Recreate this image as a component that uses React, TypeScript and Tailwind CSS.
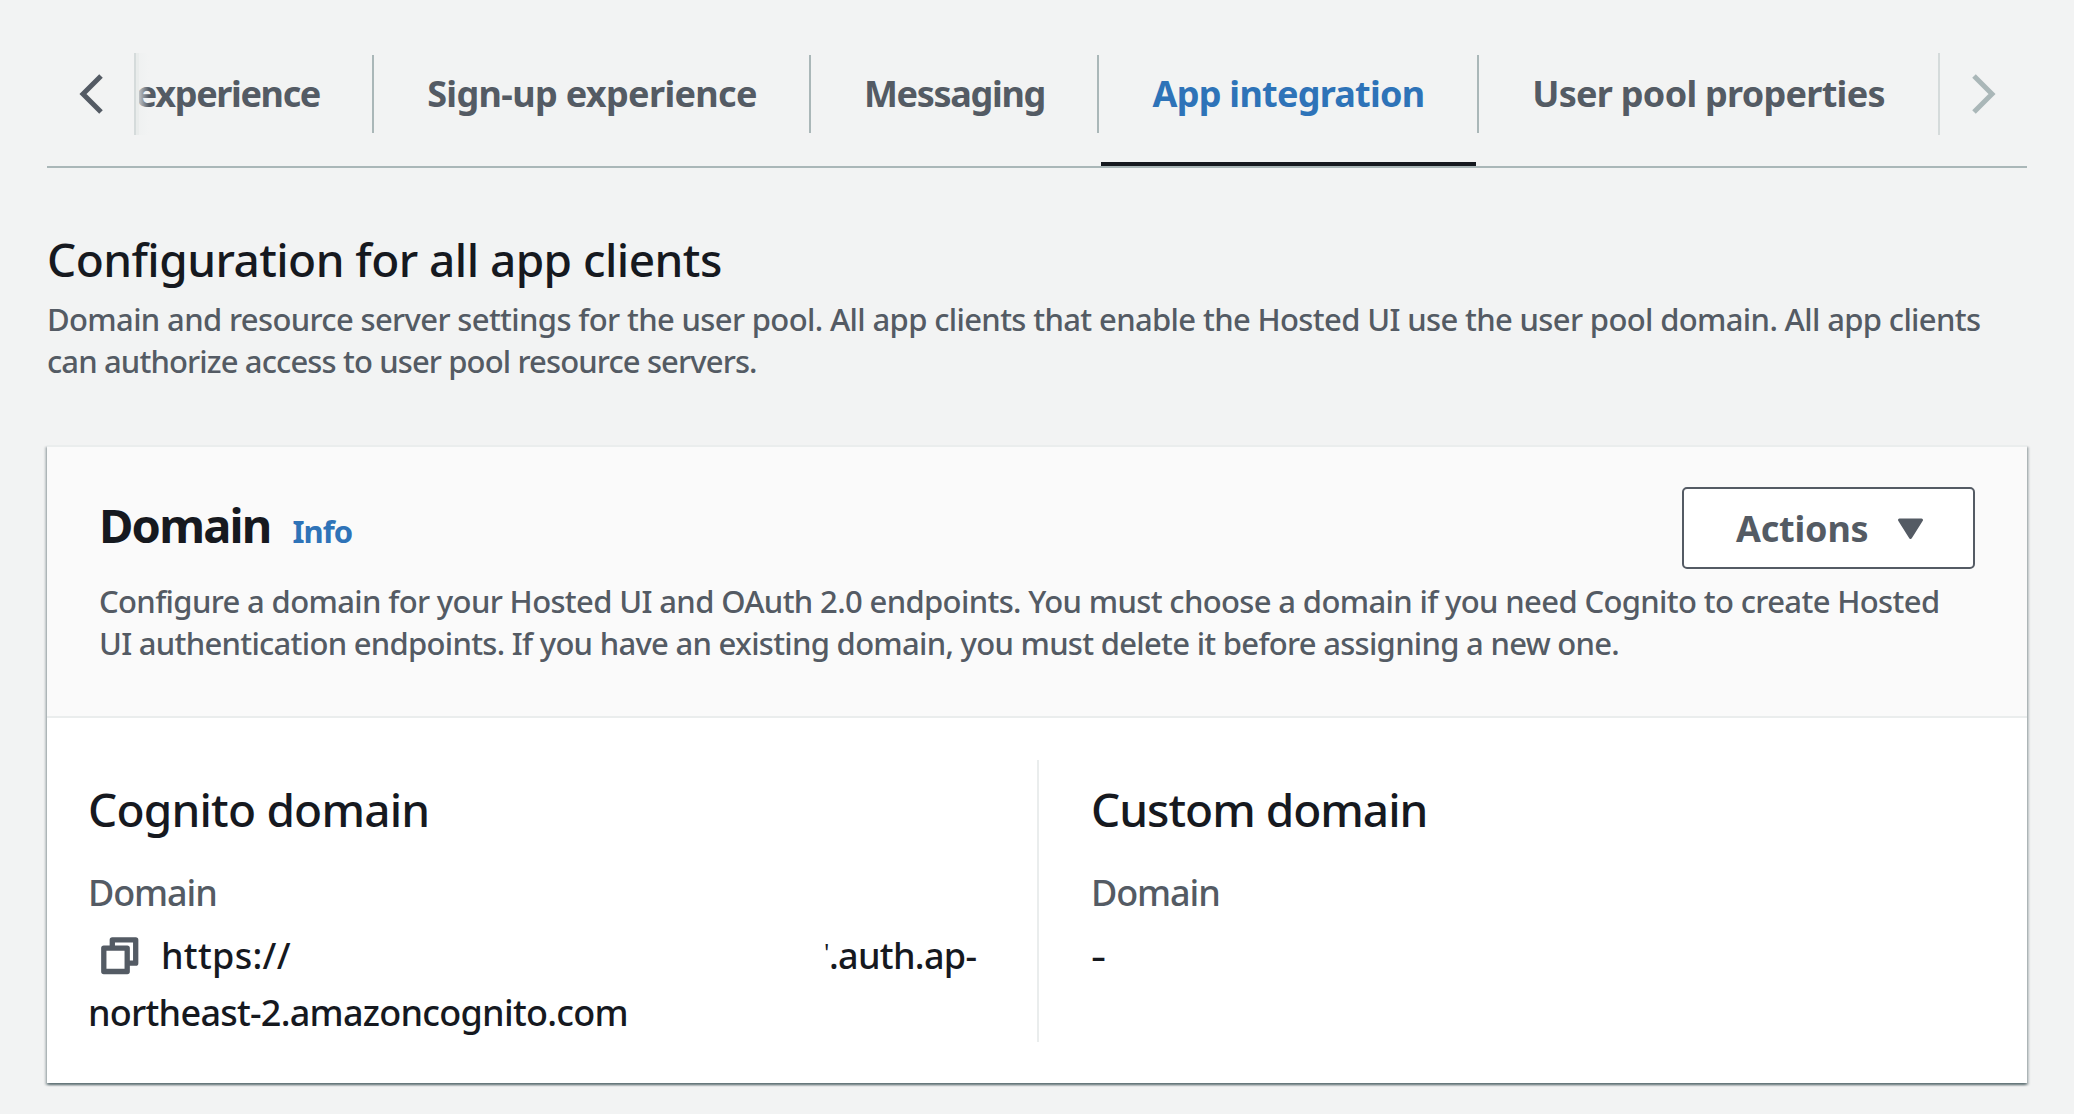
import React from "react";

function CopyIcon() {
  return (
    <svg className="h-[38px] w-[38px]" viewBox="0 0 38 38" fill="none" stroke="#545b64" strokeWidth="5.3" strokeLinejoin="round">
      <path d="M11.3 9V2.8h23.4v23.4h-7" />
      <rect x="2.8" y="11.1" width="23.4" height="23.4" />
    </svg>
  );
}

function Chevron({ direction, className }: { direction: "left" | "right"; className: string }) {
  return (
    <svg className={`h-[40px] w-[24px] ${className}`} viewBox="0 0 24 40" fill="none" stroke="currentColor" strokeWidth="5">
      <path d={direction === "left" ? "M22 2L4 20l18 18" : "M2 2l18 18-18 18"} />
    </svg>
  );
}

function Tab({ label, className, active = false }: { label: string; className: string; active?: boolean }) {
  return (
    <button
      className={`relative flex h-[78px] shrink-0 items-center border-r-2 border-[#aab7b8] text-[36px] font-bold whitespace-nowrap ${
        active ? "text-[#2e73b8]" : "text-[#545b64]"
      } ${className}`}
    >
      {label}
      {active && <span className="absolute top-[107px] right-[1px] left-[2px] h-[4px] bg-[#16191f]" />}
    </button>
  );
}

function Tabs() {
  return (
    <nav className="flex h-[168px] border-b-2 border-[#aab7b8] pt-[53px]">
      <button className="flex h-[82px] w-[89px] shrink-0 items-center border-r-2 border-[#d5dbdb] pl-[32px]">
        <Chevron direction="left" className="text-[#545b64]" />
      </button>
      <div className="relative flex w-[1802px] shrink-0 pt-[2px]">
        <span className="absolute top-0 left-0 z-10 h-[82px] w-[3px] bg-[#e9eceb]" />
        <span className="absolute top-0 left-[3px] z-10 h-[82px] w-[10px] bg-linear-to-r from-[#eef0f0]/70 to-transparent" />
        <Tab label="experience" className="w-[238px] justify-end pr-[52px] tracking-[-1.35px]" />
        <Tab label="Sign-up experience" className="w-[437px] justify-center pl-[1px] tracking-[-0.65px]" />
        <Tab label="Messaging" className="w-[288px] justify-center pl-[1px] tracking-[-1.3px]" />
        <Tab label="App integration" active className="w-[380px] justify-center pl-[1px] tracking-[-0.75px]" />
        <div className="flex h-[78px] flex-1 items-center justify-center text-[36px] font-bold tracking-[-0.72px] whitespace-nowrap text-[#545b64]">
          User pool properties
        </div>
      </div>
      <button className="flex h-[82px] flex-1 items-center border-l-2 border-[#d5dbdb] pl-[32px]">
        <Chevron direction="right" className="text-[#aab7b8]" />
      </button>
    </nav>
  );
}

export default function App() {
  return (
    <main className="h-[1114px] w-[2074px] overflow-hidden bg-[#f2f3f3] px-[47px] font-['Noto_Sans',sans-serif] font-medium text-[#16191f]">
      <Tabs />

      <section className="pt-[63px]">
        <h1 className="text-[46px] leading-[56px] font-medium tracking-[-0.56px]">Configuration for all app clients</h1>
        <p className="mt-[11px] text-[31px] leading-[42px] tracking-[-0.64px] whitespace-nowrap text-[#545b64]">
          Domain and resource server settings for the user pool. All app clients that enable the Hosted UI use the user pool domain. All app clients
          <br />
          <span className="tracking-[-0.87px]">can authorize access to user pool resource servers.</span>
        </p>
      </section>

      <section className="mt-[63px] h-[638px] border-t-2 border-[#eaeded] bg-white shadow-[0_2px_2px_0_rgba(0,28,36,0.38),2px_2px_2px_0_rgba(0,28,36,0.2),-2px_2px_2px_0_rgba(0,28,36,0.2)]">
        <header className="h-[271px] border-b-2 border-[#eaeded] bg-[#fafafa] pt-[40px] pr-[52px] pl-[52px]">
          <div className="flex h-[82px] items-start justify-between">
            <div className="flex items-baseline pt-[10px]">
              <h2 className="text-[47px] leading-[56px] font-bold tracking-[-1.8px]">Domain</h2>
              <a className="ml-[22px] text-[31px] font-bold tracking-[-1px] text-[#2e73b8]">Info</a>
            </div>
            <button className="flex h-[82px] w-[293px] items-center rounded-[5px] border-2 border-[#545b64] bg-white pt-[2px] pl-[52px] text-[36px] font-bold tracking-[-0.2px] text-[#545b64]">
              Actions
              <svg className="mr-[49px] ml-auto h-[22px] w-[27px]" viewBox="0 0 27 22">
                <path d="M2.5 2h22L13.5 19.5z" fill="#545b64" stroke="#545b64" strokeWidth="3" strokeLinejoin="round" />
              </svg>
            </button>
          </div>
          <p className="mt-[11px] text-[31px] leading-[42px] tracking-[-0.64px] whitespace-nowrap text-[#545b64]">
            Configure a domain for your Hosted UI and OAuth 2.0 endpoints. You must choose a domain if you need Cognito to create Hosted
            <br />
            <span className="tracking-[-0.71px]">
              UI authentication endpoints. If you have an existing domain, you must delete it before assigning a new one.
            </span>
          </p>
        </header>

        <div className="flex pt-[42px]">
          <div className="h-[282px] w-[992px] border-r-2 border-[#eaeded] pt-[21px] pl-[41px]">
            <h3 className="text-[46px] leading-[56px] font-medium tracking-[-0.8px]">Cognito domain</h3>
            <div className="mt-[34px] text-[36px] leading-[44px] tracking-[-1.1px] text-[#545b64]">Domain</div>
            <div className="mt-[12px] flex h-[57px] items-center text-[36px] leading-[57px] tracking-[-0.7px] whitespace-nowrap">
              <span className="ml-[13px]">
                <CopyIcon />
              </span>
              <span className="ml-[22px] w-[663px] tracking-[0.3px]">https://</span>
              <span className="w-[5px] pb-[9px] text-[24px] font-normal tracking-normal">'</span>
              <span>.auth.ap-</span>
            </div>
            <div className="text-[36px] leading-[57px] tracking-[-0.74px]">northeast-2.amazoncognito.com</div>
          </div>
          <div className="flex-1 pt-[21px] pl-[52px]">
            <h3 className="text-[46px] leading-[56px] font-medium tracking-[-1px]">Custom domain</h3>
            <div className="mt-[34px] text-[36px] leading-[44px] tracking-[-1.1px] text-[#545b64]">Domain</div>
            <div className="mt-[12px] origin-left scale-x-130 text-[36px] leading-[57px]">-</div>
          </div>
        </div>
      </section>
    </main>
  );
}
